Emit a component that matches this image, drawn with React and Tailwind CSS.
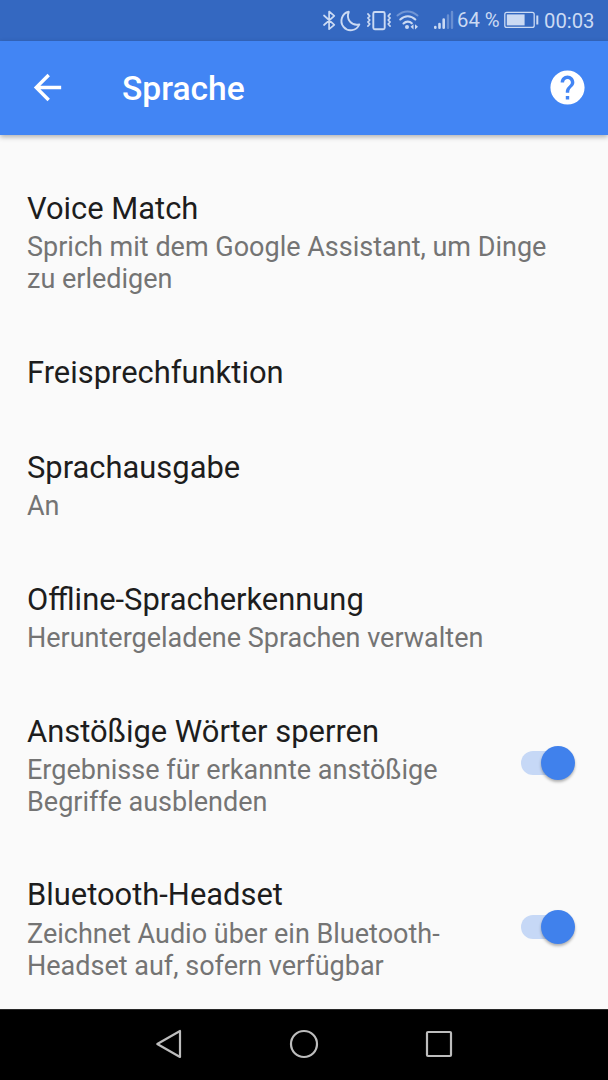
const SETTINGS = [
  { title: 'Voice Match', lines: ['Sprich mit dem Google Assistant, um Dinge', 'zu erledigen'] },
  { title: 'Freisprechfunktion', lines: [] },
  { title: 'Sprachausgabe', lines: ['An'] },
  { title: 'Offline-Spracherkennung', lines: ['Heruntergeladene Sprachen verwalten'] },
  { title: 'Anstößige Wörter sperren', lines: ['Ergebnisse für erkannte anstößige', 'Begriffe ausblenden'], on: true },
  { title: 'Bluetooth-Headset', lines: ['Zeichnet Audio über ein Bluetooth-', 'Headset auf, sofern verfügbar'], on: true },
];

function StatusBar() {
  return (
    <div className="flex h-[41px] shrink-0 items-center bg-[#3468c1] text-[#cbdaf3]">
      <svg className="h-[41px] w-[145px] ml-[310px] shrink-0" viewBox="310 0 145 41" fill="none" stroke="currentColor" strokeWidth="1.7" strokeLinecap="round" strokeLinejoin="round">
        <path d="M324 15.500 334.300 24.800l-5.200 4.400V11.500l5.200 4.300-10.300 9.200" />
        <path d="M348.800 11.800A9.300 9.300 0 1 0 359.300 24.500C351.500 26.200 345.800 19.500 348.800 11.800Z" strokeWidth="1.900" />
        <rect x="373.300" y="12" width="11.400" height="17.300" rx="1.500" strokeWidth="1.900" />
        <path d="m368 14 1.700 2-1.700 2 1.700 2-1.700 2 1.700 2-1.700 2M390 14l-1.700 2 1.700 2-1.700 2 1.700 2-1.700 2 1.700 2" strokeWidth="1.900" />
        <path d="M397.500 15.500c6-5.500 14-5.500 20 0" opacity=".4" strokeWidth="2" />
        <path d="M400.300 19.500c4.500-4.300 10.500-4.300 15 0M403.500 23.500c2.500-2.500 6-2.500 8.300-.2" strokeWidth="2.100" />
        <circle cx="407" cy="27" r="2" fill="currentColor" stroke="none" />
        <path d="M410.500 26.800l3-2.600v5.200zM418 26.800l-3-2.600v5.200z" fill="currentColor" stroke="none" />
        <path d="M435.300 27v.8M439.500 24v3.800M443.700 19.500v8.300" strokeWidth="2.600" />
        <path d="M448 15.500v12.300M452 12v15.800" strokeWidth="2.400" opacity=".35" />
      </svg>
      <span className="ml-[2px] w-[47px] shrink-0 whitespace-nowrap text-[20.300px] leading-[41px]">64 %</span>
      <svg className="h-[41px] w-[36px] shrink-0" viewBox="504 0 36 41" fill="none" stroke="currentColor">
        <rect x="504.800" y="12.400" width="29.400" height="15" rx="2" strokeWidth="1.300" />
        <path d="M506.800 14.400h17.800v11h-17.800z" fill="currentColor" stroke="none" />
        <path d="M537.300 15.500v9" strokeWidth="2" />
      </svg>
      <span className="ml-[4px] whitespace-nowrap pt-px text-[20.300px] leading-[41px]">00:03</span>
    </div>
  );
}

function AppBar() {
  return (
    <header className="z-10 flex h-[94px] shrink-0 items-center bg-[#4285f4] pr-[20px] pb-px pl-[27px] text-white shadow-[0_2px_5px_rgba(0,0,0,0.3)]">
      <svg className="size-[41px] shrink-0" viewBox="0 0 24 24" fill="currentColor">
        <path d="M20 11H7.830l5.590-5.590L12 4l-8 8 8 8 1.410-1.410L7.830 13H20z" />
      </svg>
      <h1 className="ml-[54px] flex-1 pt-[3px] text-[33.600px] leading-[40px] font-medium">Sprache</h1>
      <svg className="size-[41px] shrink-0" viewBox="0 0 24 24" fill="currentColor">
        <path d="M12 2C6.480 2 2 6.480 2 12s4.480 10 10 10 10-4.480 10-10S17.520 2 12 2zm1 17h-2v-2h2v2zm2.070-7.750l-.9.920C13.450 12.900 13 13.500 13 15h-2v-.5c0-1.100.45-2.100 1.170-2.830l1.240-1.260c.37-.36.590-.86.590-1.410 0-1.100-.9-2-2-2s-2 .9-2 2H8c0-2.210 1.790-4 4-4s4 1.790 4 4c0 .88-.36 1.680-.93 2.250z" />
      </svg>
    </header>
  );
}

function Toggle() {
  return (
    <div className="mb-[5px] flex h-[34px] w-[54px] shrink-0 items-center">
      <div className="h-[24px] w-[40px] rounded-full bg-[#c6d8f6]" />
      <div className="-ml-[20px] size-[34px] shrink-0 rounded-full bg-[#4081ec] shadow-[0_2px_3px_rgba(0,0,0,0.3)]" />
    </div>
  );
}

function Row({ title, lines, on }) {
  return (
    <div className="flex items-center justify-between pt-[29.100px] pr-[33px] pb-[30.100px] pl-[27px]">
      <div>
        <div className="text-[30.900px] leading-[35.800px] text-[#1d1d1d]">{title}</div>
        {lines.length > 0 && (
          <div className="mt-[5.500px] -mb-[0.500px] text-[27px] leading-[31.900px] text-[#747474]">
            {lines.map((line) => (
              <div key={line} className="whitespace-nowrap">{line}</div>
            ))}
          </div>
        )}
      </div>
      {on && <Toggle />}
    </div>
  );
}

function NavBar() {
  return (
    <nav className="flex h-[71px] shrink-0 items-center justify-center gap-[105px] border-t border-[#292929] bg-black pb-[2px] text-[#bdbdbd]">
      <svg className="size-[30px]" viewBox="0 0 30 30" fill="none" stroke="currentColor" strokeWidth="2.200" strokeLinejoin="round">
        <path d="M26 2v26L3.300 15z" />
      </svg>
      <svg className="size-[30px]" viewBox="0 0 30 30" fill="none" stroke="currentColor" strokeWidth="2.200">
        <circle cx="15" cy="15" r="13" />
      </svg>
      <svg className="size-[30px]" viewBox="0 0 30 30" fill="none" stroke="currentColor" strokeWidth="2.200">
        <rect x="3" y="3" width="24" height="24" rx="1" />
      </svg>
    </nav>
  );
}

export default function App() {
  return (
    <div className="flex h-[1080px] w-[608px] flex-col overflow-hidden bg-[#fafafa] font-[Roboto,sans-serif]">
      <StatusBar />
      <AppBar />
      <main className="min-h-0 flex-1 overflow-hidden pt-[27px]">
        {SETTINGS.map((item) => (
          <Row key={item.title} {...item} />
        ))}
      </main>
      <NavBar />
    </div>
  );
}
